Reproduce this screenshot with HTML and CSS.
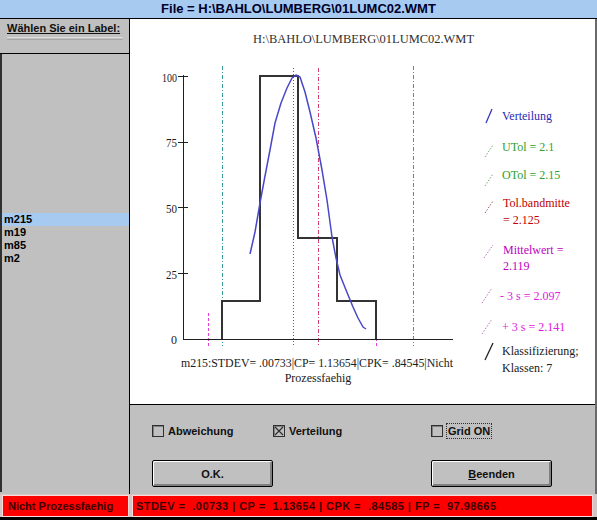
FILE: index.html
```html
<!DOCTYPE html>
<html>
<head>
<meta charset="utf-8">
<title>Verteilung</title>
<link rel="stylesheet" href="styles.css">
</head>
<body>
<div class="window">
  <div class="titlebar">File = H:\BAHLO\LUMBERG\01LUMC02.WMT</div>
  <div class="main">
    <aside class="left">
      <div class="label-box">
        <span class="label">Wählen Sie ein Label:</span>
        <div class="sep"></div>
      </div>
      <ul class="listbox">
        <li class="sel">m215</li>
        <li>m19</li>
        <li>m85</li>
        <li>m2</li>
      </ul>
    </aside>
    <section class="right">
      <div class="chart">
        <svg class="plot" width="465" height="385" viewBox="130 19 465 385" xmlns="http://www.w3.org/2000/svg">
          <text class="title" x="253" y="43" textLength="221" lengthAdjust="spacingAndGlyphs">H:\BAHLO\LUMBERG\01LUMC02.WMT</text>

          <!-- reference lines -->
          <line x1="208.5" y1="313" x2="208.5" y2="346" class="l-sigma"/>
          <line x1="222.5" y1="66" x2="222.5" y2="346" class="l-tol"/>
          <line x1="293.5" y1="68" x2="293.5" y2="347" class="l-mean"/>
          <line x1="318.5" y1="68" x2="318.5" y2="347" class="l-mid"/>
          <line x1="376.5" y1="313" x2="376.5" y2="346" class="l-sigma"/>
          <line x1="413.5" y1="66" x2="413.5" y2="346" class="l-tol"/>

          <!-- axes -->
          <line x1="183.5" y1="75" x2="183.5" y2="340" class="axis"/>
          <line x1="183" y1="339.5" x2="453" y2="339.5" class="axis"/>
          <line x1="178" y1="76.5" x2="188" y2="76.5" class="axis"/>
          <line x1="178" y1="142.5" x2="188" y2="142.5" class="axis"/>
          <line x1="178" y1="207.5" x2="188" y2="207.5" class="axis"/>
          <line x1="178" y1="273.5" x2="188" y2="273.5" class="axis"/>
          <text class="tick" x="177" y="82" textLength="15" lengthAdjust="spacingAndGlyphs">100</text>
          <text class="tick" x="177" y="147" textLength="11" lengthAdjust="spacingAndGlyphs">75</text>
          <text class="tick" x="177" y="213" textLength="11" lengthAdjust="spacingAndGlyphs">50</text>
          <text class="tick" x="177" y="279" textLength="11" lengthAdjust="spacingAndGlyphs">25</text>
          <text class="tick" x="177" y="344" textLength="6" lengthAdjust="spacingAndGlyphs">0</text>

          <!-- histogram -->
          <path class="hist" d="M222,339 V301 H260 V76 H298 V238 H337 V301 H376 V339"/>

          <!-- distribution curve -->
          <polyline class="curve" points="250,254 255,232 260,203 265,176 270,150 275,123 281,103 287,88 292,78 296,75 300,77 305,92 310,112 316,138 322,170 327,200 332,237 336,258 340,275 346,290 353,307 358,318 363,327 366,329"/>

          <!-- caption -->
          <text class="cap" x="181" y="367" textLength="272" lengthAdjust="spacingAndGlyphs">m215:STDEV= .00733|CP= 1.13654|CPK= .84545|Nicht</text>
          <text class="cap" x="318" y="382" text-anchor="middle">Prozessfaehig</text>

          <!-- legend -->
          <line x1="486" y1="123" x2="492" y2="109" class="lg-blue"/>
          <text class="lg t-blue" x="502" y="120">Verteilung</text>

          <line x1="485" y1="157" x2="493" y2="145" class="lg-green"/>
          <text class="lg t-green" x="502" y="151">UTol = 2.1</text>

          <line x1="485" y1="186" x2="493" y2="174" class="lg-green"/>
          <text class="lg t-green" x="502" y="179">OTol =  2.15</text>

          <line x1="485" y1="213" x2="493" y2="201" class="lg-red"/>
          <text class="lg t-red" x="503" y="207">Tol.bandmitte</text>
          <text class="lg t-red" x="503" y="224">= 2.125</text>

          <line x1="484" y1="258" x2="493" y2="245" class="lg-mag"/>
          <text class="lg t-mag" x="503" y="254">Mittelwert =</text>
          <text class="lg t-mag" x="503" y="270">2.119</text>

          <line x1="482" y1="303" x2="492" y2="288" class="lg-mag"/>
          <text class="lg t-pink" x="500" y="300">- 3 s = 2.097</text>

          <line x1="482" y1="334" x2="492" y2="319" class="lg-mag"/>
          <text class="lg t-pink" x="502" y="331">+ 3 s = 2.141</text>

          <line x1="485" y1="360" x2="493" y2="343" class="lg-black"/>
          <text class="lg t-black" x="502" y="355">Klassifizierung;</text>
          <text class="lg t-black" x="502" y="372">Klassen: 7</text>
        </svg>
      </div>
      <div class="controls">
        <label class="check"><span class="box"></span><span class="ctext">Abweichung</span></label>
        <label class="check"><span class="box"><svg width="10" height="10" viewBox="0 0 10 10"><path d="M1,1 L9,9 M9,1 L1,9" stroke="#303030" stroke-width="1.2" fill="none"/></svg></span><span class="ctext">Verteilung</span></label>
        <label class="check"><span class="box"></span><span class="ctext focus">Grid ON</span></label>
        <button class="btn">O.K.</button>
        <span></span>
        <button class="btn"><u>B</u>eenden</button>
      </div>
    </section>
  </div>
  <div class="status">
    <div class="st st-left">Nicht Prozessfaehig</div>
    <div class="st st-right">STDEV =  .00733 | CP =  1.13654 | CPK =  .84585 | FP =  97.98665</div>
  </div>
</div>
</body>
</html>
```

FILE: styles.css
```css
* { box-sizing: border-box; }
html, body { margin: 0; padding: 0; }
body {
  width: 597px;
  height: 520px;
  overflow: hidden;
  background: #c0c0c0;
  font-family: "Liberation Sans", Arial, sans-serif;
  color: #000;
}
.window {
  display: flex;
  flex-direction: column;
  height: 520px;
}
.titlebar {
  height: 19px;
  background: #a6caf0;
  border-bottom: 1px solid #000;
  text-align: center;
  font-weight: bold;
  font-size: 13px;
  line-height: 18px;
  color: #00002a;
}
.main {
  display: flex;
  height: 475px;
}
.left {
  width: 130px;
  border-right: 1px solid #000;
  display: flex;
  flex-direction: column;
}
.label-box {
  height: 35px;
  border-bottom: 1px solid #000;
  padding: 3px 6px 0 7px;
}
.label {
  display: block;
  font-size: 11px;
  font-weight: bold;
  line-height: 12px;
  text-decoration: underline;
  color: #101010;
}
.sep {
  margin-top: 3px;
  height: 3px;
  border-top: 1px solid #dedede;
  border-bottom: 1px solid #a8a8a8;
}
.listbox {
  flex: 1;
  margin: 0 0 2px 0;
  padding: 159px 0 0 0;
  list-style: none;
  border-left: 2px solid #303030;
  font-size: 11px;
  font-weight: bold;
  line-height: 13px;
}
.listbox li {
  padding-left: 2px;
  height: 13px;
}
.listbox li.sel {
  background: #a6caf0;
}
.right {
  flex: 1;
  display: flex;
  flex-direction: column;
  border-right: 2px solid #6a6a6a;
}
.chart {
  height: 386px;
  background: #fff;
  border-bottom: 1px solid #000;
}
.plot {
  display: block;
  font-family: "Liberation Serif", "Times New Roman", serif;
}
.plot text { font-size: 12px; }
.plot .title { font-size: 13px; fill: #303030; }
.plot .tick { text-anchor: end; fill: #202020; font-size: 13px; }
.plot .cap { fill: #202020; }
.axis { stroke: #202020; stroke-width: 1; }
.hist { fill: none; stroke: #333; stroke-width: 2; }
.curve { fill: none; stroke: #4848c8; stroke-width: 1.5; stroke-linejoin: round; }
.l-tol { stroke: #3a9a9a; stroke-width: 1; stroke-dasharray: 4 2 1 2; }
.l-mean { stroke: #5a5a88; stroke-width: 1; stroke-dasharray: 1 2; }
.l-mid { stroke: #d04070; stroke-width: 1; stroke-dasharray: 4 2 1 2; }
.l-sigma { stroke: #e040e0; stroke-width: 1; stroke-dasharray: 3 2; }
.lg-blue { stroke: #3a3ac0; stroke-width: 1.3; }
.lg-green { stroke: #70b070; stroke-width: 1; stroke-dasharray: 1.5 1.5; }
.lg-red { stroke: #a06060; stroke-width: 1; stroke-dasharray: 1.5 1.5; }
.lg-mag { stroke: #c070c0; stroke-width: 1; stroke-dasharray: 1.5 1.5; }
.lg-black { stroke: #202020; stroke-width: 1.3; }
.t-blue { fill: #2a2ab0; }
.t-green { fill: #2ea02e; }
.t-red { fill: #c00000; }
.t-mag { fill: #c000c0; }
.t-pink { fill: #e020e0; }
.t-black { fill: #202020; }

.controls {
  flex: 1;
  display: grid;
  grid-template-columns: 121px 158px 121px;
  grid-template-rows: 12px 27px;
  row-gap: 23px;
  padding: 20px 0 0 22px;
  align-content: start;
}
.check {
  display: flex;
  align-items: center;
  gap: 4px;
  font-size: 11px;
  font-weight: bold;
  line-height: 12px;
  color: #101010;
}
.box {
  width: 12px;
  height: 12px;
  border: 1px solid #303030;
  box-shadow: inset 1px 1px 0 #808080;
  display: flex;
  align-items: center;
  justify-content: center;
}
.box svg { display: block; }
.ctext.focus {
  outline: 1px dotted #303030;
  outline-offset: 1px;
  margin-left: 1px;
}
.btn {
  height: 27px;
  padding: 0;
  background: #c0c0c0;
  border: 1px solid #000;
  border-radius: 2px;
  box-shadow: inset 1px 1px 0 #fff, inset -2px -2px 0 #808080;
  font-family: "Liberation Sans", Arial, sans-serif;
  font-size: 11px;
  font-weight: bold;
  color: #101010;
}
.status {
  height: 26px;
  display: flex;
  gap: 3px;
  padding: 1px 4px 0 2px;
  background: #d0c8c8;
  border-bottom: 3px solid #000;
}
.st {
  height: 22px;
  background: #ff0000;
  border: 1px solid #ffd8d8;
  font-size: 11px;
  font-weight: bold;
  line-height: 20px;
  color: #3a0000;
  white-space: pre;
  overflow: hidden;
}
.st-left {
  width: 127px;
  padding-left: 5px;
}
.st-right {
  flex: 1;
  padding-left: 3px;
  letter-spacing: 0.45px;
}
```
